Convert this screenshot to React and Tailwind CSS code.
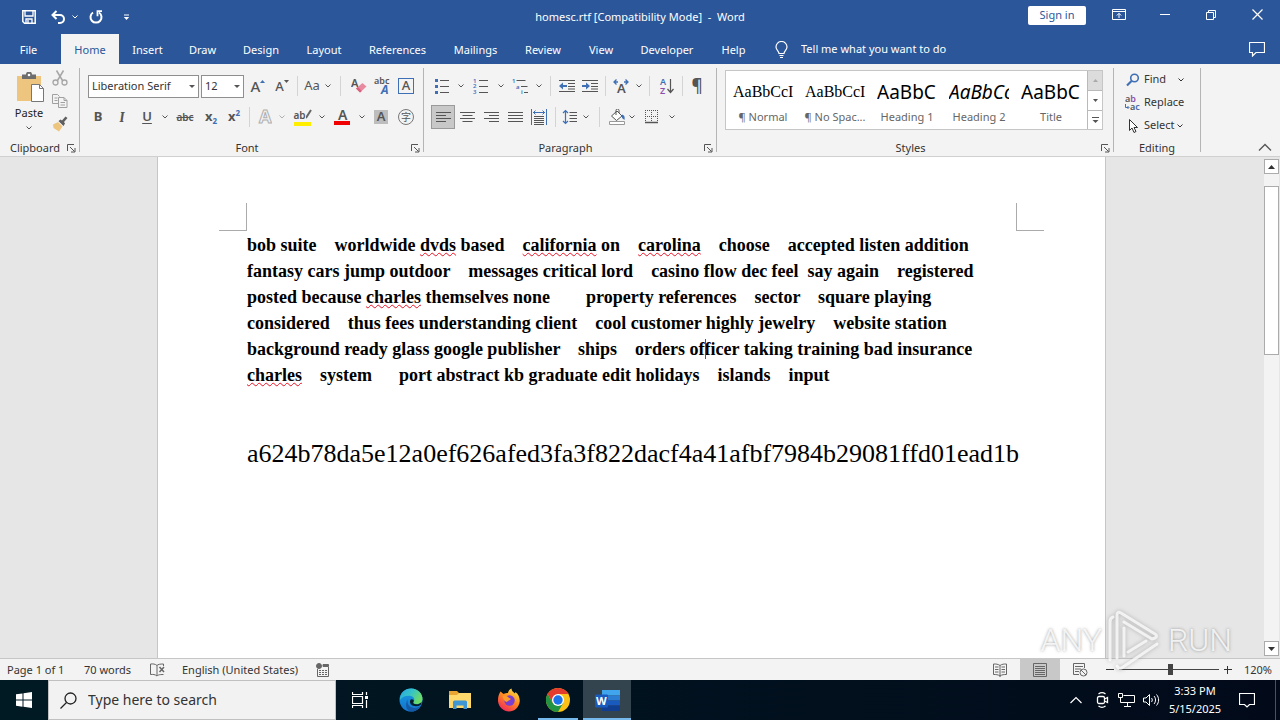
import React, { useState } from 'react';

const TABS = [
  { name: 'File', width: 'w-[61px] pr-1' },
  { name: 'Home', width: 'w-[58px]' },
  { name: 'Insert', width: 'w-[57px]' },
  { name: 'Draw', width: 'w-[53px]' },
  { name: 'Design', width: 'w-[64px]' },
  { name: 'Layout', width: 'w-[62px]' },
  { name: 'References', width: 'w-[85px]' },
  { name: 'Mailings', width: 'w-[71px]' },
  { name: 'Review', width: 'w-[64px]' },
  { name: 'View', width: 'w-[52px]' },
  { name: 'Developer', width: 'w-[80px]' },
  { name: 'Help', width: 'w-[53px]' },
];

const STYLES = [
  { sample: 'AaBbCcI', label: '¶ Normal', font: 'font-["Liberation_Serif",serif] text-base' },
  { sample: 'AaBbCcI', label: '¶ No Spac...', font: 'font-["Liberation_Serif",serif] text-base' },
  { sample: 'AaBbC', label: 'Heading 1', font: 'text-[19px]' },
  { sample: 'AaBbCc', label: 'Heading 2', font: 'text-[19px] italic' },
  { sample: 'AaBbC', label: 'Title', font: 'text-[19px]' },
];

// words wrapped in * are flagged by the spell checker
const LINES = [
  'bob suite    worldwide *dvds* based    *california* on    *carolina*    choose    accepted listen addition',
  'fantasy cars jump outdoor    messages critical lord    casino flow dec feel  say again    registered',
  'posted because *charles* themselves none        property references    sector    square playing',
  'considered    thus fees understanding client    cool customer highly jewelry    website station',
  'background ready glass google publisher    ships    orders of|ficer taking training bad insurance',
  '*charles*    system      port abstract kb graduate edit holidays    islands    input',
];

function Icon({ w = 16, h = 16, className = '', children }) {
  return (
    <svg
      width={w}
      height={h}
      viewBox={`0 0 ${w} ${h}`}
      fill="none"
      stroke="currentColor"
      className={`shrink-0 ${className}`}
      aria-hidden="true"
    >
      {children}
    </svg>
  );
}

function Letter({ x, y, size, fill = 'currentColor', weight = 600, children }) {
  return (
    <text x={x} y={y} fontSize={size} fontWeight={weight} fill={fill} stroke="none">
      {children}
    </text>
  );
}

function Chevron({ className = '' }) {
  return (
    <Icon w={8} h={6} className={className}>
      <path d="M1.5 1.5 4 4l2.5-2.5" />
    </Icon>
  );
}

function Btn({ label, className = '', children }) {
  return (
    <button
      type="button"
      aria-label={label}
      className={`flex h-6 shrink-0 items-center justify-center ${className}`}
    >
      {children}
    </button>
  );
}

function Drop({ label, className = '' }) {
  return (
    <Btn label={label} className={`w-2.5 ${className}`}>
      <Chevron />
    </Btn>
  );
}

function Divider({ className }) {
  return (
    <span className={`flex h-5 shrink-0 justify-center ${className}`}>
      <span className="w-px bg-[#d4d4d4]" />
    </span>
  );
}

function Group({ title, launcher, className, children }) {
  return (
    <section className={`flex shrink-0 flex-col border-r border-[#b5b5b5] ${className}`}>
      <div className="flex-1">{children}</div>
      <div className="-mb-1 flex h-4 items-center px-[3px] text-[11px] leading-4 text-[#333]">
        <span className="flex-1 text-center">{title}</span>
        {launcher && (
          <button type="button" aria-label={`${title} settings`}>
            <Icon w={9} h={9} className="text-[#555]">
              <path d="M.5 7V.5H7M3 3l4.5 4.5M8 4v4H4" />
            </Icon>
          </button>
        )}
      </div>
    </section>
  );
}

function TitleBar() {
  return (
    <div className="grid h-[34px] grid-cols-[1fr_auto_1fr] items-center text-[11px]">
      <div className="flex items-center pl-[22px]">
        <button type="button" aria-label="Save">
          <Icon w={14} h={14}>
            <path d="M.8.8h12.4v12.4H2.5L.8 11.5z" strokeWidth="1.5" />
            <path d="M3 1v5h8V1M4 13V9h6v4M6 10v3" strokeWidth="1.3" />
          </Icon>
        </button>
        <button type="button" aria-label="Undo" className="ml-[15px]">
          <Icon w={14} h={14}>
            <path d="M5.5 1 1.5 5l4 4M2 5h7a3.7 3.7 0 0 1 0 8H7" strokeWidth="2" />
          </Icon>
        </button>
        <button type="button" aria-label="Undo list" className="ml-1.5">
          <Chevron />
        </button>
        <button type="button" aria-label="Redo" className="ml-[10px]">
          <Icon w={14} h={14}>
            <path d="M4 2.5a5.5 5.5 0 1 0 6 0" strokeWidth="2" />
            <path d="M13 1.2H8.5v5" strokeWidth="1.8" />
          </Icon>
        </button>
        <button type="button" aria-label="Customize toolbar" className="ml-5">
          <Icon w={7} h={7}>
            <path d="M1 1h5" />
            <path d="M.8 3h5.4L3.5 6z" fill="currentColor" stroke="none" />
          </Icon>
        </button>
      </div>
      <h1 className="pt-px whitespace-pre">homesc.rtf [Compatibility Mode]  -  Word</h1>
      <div className="flex items-start justify-end pr-[17px] pb-1">
        <button
          type="button"
          className="mt-px mr-[26px] h-[19px] w-[58px] rounded-xs bg-white text-[#2b579a]"
        >
          Sign in
        </button>
        <button type="button" aria-label="Ribbon display options" className="mt-1 mr-[34px]">
          <Icon w={14} h={12}>
            <path d="M.5.5h13v10H.5zM.5 2.5h13M7 9V4.5M4.8 6.5 7 4.3l2.2 2.2" />
          </Icon>
        </button>
        <button type="button" aria-label="Minimize" className="mt-1 mr-9">
          <Icon w={10} h={11}>
            <path d="M0 5.5h10" />
          </Icon>
        </button>
        <button type="button" aria-label="Restore" className="mt-1 mr-9">
          <Icon w={10} h={11}>
            <path d="M.5 3.5h7v7h-7zM2.5 3V1.5h7v7H8" />
          </Icon>
        </button>
        <button type="button" aria-label="Close" className="mt-1">
          <Icon w={11} h={11}>
            <path d="m.5.5 10 10m0-10-10 10" strokeWidth="1.2" />
          </Icon>
        </button>
      </div>
    </div>
  );
}

function TabRow({ active, onSelect }) {
  return (
    <nav className="flex h-[30px] items-stretch text-[11px]">
      {TABS.map((tab) => (
        <button
          key={tab.name}
          type="button"
          onClick={() => onSelect(tab.name)}
          className={`shrink-0 pt-0.5 text-center ${tab.width} ${
            tab.name === active ? 'bg-[#f3f3f3] text-[#2b579a]' : ''
          }`}
        >
          {tab.name}
        </button>
      ))}
      <label className="flex items-center pl-[15px]">
        <Icon w={13} h={17}>
          <path
            d="M4 12.5c0-2.5-3-3.5-3-6.5a5.3 5.3 0 0 1 11 0c0 3-3 4-3 6.5zM4.5 14.5h4M5 16.5h3"
            strokeWidth="1.2"
          />
        </Icon>
        <input
          aria-label="Tell me what you want to do"
          placeholder="Tell me what you want to do"
          className="ml-[13px] w-44 bg-transparent text-[11px] outline-none placeholder:text-white"
        />
      </label>
      <button type="button" aria-label="Comments" className="mr-[15px] ml-auto">
        <Icon w={16} h={15}>
          <path d="M.5.5h15v10H7L3.500 14v-3.500h-3z" strokeWidth="1.2" />
        </Icon>
      </button>
    </nav>
  );
}

function ClipboardGroup() {
  return (
    <Group title="Clipboard" launcher className="w-20">
      <div className="flex">
        <button
          type="button"
          className="ml-3.5 flex w-[30px] flex-col items-center pt-1 text-[11px] leading-4"
        >
          <Icon w={30} h={31}>
            <path d="M3 4h24v25H3z" fill="#edc57e" stroke="none" />
            <path d="M8 2.5h4a3 3 0 0 1 6 0h4V7H8z" fill="#6d6d6d" stroke="none" />
            <circle cx="15" cy="3" r="1.3" fill="#fff" stroke="none" />
            <path d="M17.5 12.5h8l4 4v13h-12z" fill="#fff" stroke="#777" />
            <path d="M25.5 12.5v4h4" stroke="#777" />
          </Icon>
          <span className="mt-0.5 text-[#222]">Paste</span>
          <Chevron className="mt-1" />
        </button>
        <div className="ml-2 flex flex-col gap-[7px] pt-0.5">
          <button type="button" aria-label="Cut">
            <Icon className="text-[#a6a6a6]">
              <path d="m4.5.5 6 10m1-10-6 10" strokeWidth="1.5" />
              <circle cx="3.5" cy="12.5" r="2.5" strokeWidth="1.3" />
              <circle cx="12.5" cy="12.5" r="2.5" strokeWidth="1.3" />
            </Icon>
          </button>
          <button type="button" aria-label="Copy">
            <Icon className="text-[#a0a0a0]">
              <path d="M6 10.5H.5v-9h5l2 2M2.500 5h3M2.500 7.5h3" />
              <path d="M6.5 4.5H12l3 3v7H6.500zM12 4.500v3h3M8.500 9.500H13M8.500 12H13" fill="#f3f3f3" />
            </Icon>
          </button>
          <button type="button" aria-label="Format painter">
            <Icon>
              <path d="M1 8.5 6 6l4.500 4.500L7 15.500 1.500 12z" fill="#edc57e" stroke="none" />
              <path d="m6.500 5 2-1.500 1.500 1L13.500.5 15.500 2 12 6l1 1.500-1.500 2.500z" fill="#5f5f5f" stroke="none" />
            </Icon>
          </button>
        </div>
      </div>
    </Group>
  );
}

function FontGroup() {
  const [family, setFamily] = useState('Liberation Serif');
  const [size, setSize] = useState('12');
  const select =
    'block h-[23px] w-full appearance-none border border-[#8f8f8f] bg-white pl-[3px] text-[11px] text-[#333] outline-none';
  const arrow = 'pointer-events-none absolute top-2.5 right-1';

  return (
    <Group title="Font" launcher className="w-[344px]">
      <div className="flex items-center pt-1.5 pl-2">
        <div className="relative w-[111px] shrink-0">
          <select
            aria-label="Font"
            value={family}
            onChange={(e) => setFamily(e.target.value)}
            className={select}
          >
            <option>Liberation Serif</option>
            <option>Liberation Sans</option>
          </select>
          <Icon w={6} h={3} className={arrow}>
            <path d="M0 0h6L3 3z" fill="currentColor" stroke="none" />
          </Icon>
        </div>
        <div className="relative ml-0.5 w-[43px] shrink-0">
          <select
            aria-label="Font size"
            value={size}
            onChange={(e) => setSize(e.target.value)}
            className={select}
          >
            <option>12</option>
            <option>14</option>
          </select>
          <Icon w={6} h={3} className={arrow}>
            <path d="M0 0h6L3 3z" fill="currentColor" stroke="none" />
          </Icon>
        </div>
        <Btn label="Grow font" className="ml-0.5 w-6">
          <span className="text-[15px] leading-5 font-medium">A</span>
          <Icon w={5} h={12} className="text-[#3f6fb5]">
            <path d="M0 3h5L2.500 0z" fill="currentColor" stroke="none" />
          </Icon>
        </Btn>
        <Btn label="Shrink font" className="w-6">
          <span className="text-[13px] leading-5 font-medium">A</span>
          <Icon w={5} h={12}>
            <path d="M0 0h5L2.500 3z" fill="currentColor" stroke="none" />
          </Icon>
        </Btn>
        <Divider className="w-[7px]" />
        <Btn label="Change case" className="w-[22px] text-[13px]">
          Aa
        </Btn>
        <Drop label="Case options" />
        <Divider className="w-[15px]" />
        <Btn label="Clear formatting" className="w-[22px]">
          <Icon>
            <Letter x="0" y="9" size="11">A</Letter>
            <path d="m5 10.500 6.500-5.500 4 3.500-6.500 6z" fill="#e98ba0" stroke="none" />
            <path d="m5 10.500 1.800-1.500 4 4-1.800 1.500z" fill="#d8607c" stroke="none" />
          </Icon>
        </Btn>
        <Btn label="Phonetic guide" className="w-6">
          <Icon w={16} h={18}>
            <Letter x="0" y="7" size="9">abc</Letter>
            <Letter x="7" y="17" size="12" weight="700" fill="#3f6fb5">
              <tspan fontStyle="italic">A</tspan>
            </Letter>
          </Icon>
        </Btn>
        <Btn label="Character border" className="w-6">
          <span className="flex h-4 w-4 items-center justify-center border border-[#3f6fb5] text-[13px] font-medium">
            A
          </span>
        </Btn>
      </div>
      <div className="flex items-center pt-[7px] pl-1.5">
        <Btn label="Bold" className="w-6 text-[13px] font-bold">
          B
        </Btn>
        <Btn label="Italic" className="w-6 font-serif text-[14px] font-bold italic">
          I
        </Btn>
        <Btn label="Underline" className="w-[26px] text-[13px] font-semibold underline underline-offset-2">
          U
        </Btn>
        <Drop label="Underline styles" />
        <Btn label="Strikethrough" className="w-[30px] text-[10px] font-semibold line-through">
          abc
        </Btn>
        <Btn label="Subscript" className="w-[22px] text-[13px] font-bold">
          x<span className="mt-2 text-[8px] text-[#3f6fb5]">2</span>
        </Btn>
        <Btn label="Superscript" className="w-6 text-[13px] font-bold">
          x<span className="mb-2 text-[8px] text-[#3f6fb5]">2</span>
        </Btn>
        <Divider className="w-[7px]" />
        <Btn label="Text effects" className="w-6">
          <Icon w={14} h={16}>
            <text x="1" y="14" fontSize="18" fontWeight="700" fill="#f3f3f3" stroke="#b0b0b0">
              A
            </text>
          </Icon>
        </Btn>
        <Drop label="Effect styles" className="text-[#b0b0b0]" />
        <Btn label="Highlight" className="w-[30px]">
          <span className="flex h-[17px] w-[17px] flex-col justify-between">
            <span className="flex items-start text-[10px] leading-3 font-semibold">
              ab
              <Icon w={6} h={12}>
                <path d="M5 1 .5 8l-3.500 3" strokeWidth="2" stroke="#666" />
              </Icon>
            </span>
            <span className="h-1 bg-[#ffee00]" />
          </span>
        </Btn>
        <Drop label="Highlight colors" />
        <Btn label="Font color" className="w-[30px]">
          <Icon w={16} h={17}>
            <Letter x="4" y="11" size="14">A</Letter>
            <path d="M0 12h16v4H0z" fill="#f00000" stroke="none" />
          </Icon>
        </Btn>
        <Drop label="Font colors" />
        <Btn label="Character shading" className="w-7">
          <span className="flex h-3.5 w-3.5 items-center justify-center bg-[#bdbdbd] text-[13px] font-semibold">
            A
          </span>
        </Btn>
        <Btn label="Enclose characters" className="w-[22px]">
          <span className="flex h-4 w-4 items-center justify-center rounded-full border border-[#777] font-['Noto_Sans_CJK_SC',sans-serif] text-[10px] leading-3">
            字
          </span>
        </Btn>
      </div>
    </Group>
  );
}

function AlignIcon({ d }) {
  return (
    <Icon w={15} h={13}>
      <path d={d} />
    </Icon>
  );
}

function ParagraphGroup() {
  return (
    <Group title="Paragraph" launcher className="w-[293px]">
      <div className="flex items-center pt-1.5 pl-1">
        <Btn label="Bullets" className="w-7">
          <Icon>
            <path d="M6 2.500h9M6 8.500h9M6 14.500h9" />
            <path d="M1 1h3v3H1zM1 7h3v3H1zM1 13h3v3H1z" fill="#3f6fb5" stroke="none" />
          </Icon>
        </Btn>
        <Drop label="Bullet library" />
        <Btn label="Numbering" className="w-[30px]">
          <Icon>
            <path d="M6 2.500h9M6 8.500h9M6 14.500h9" />
            <Letter x="0" y="5" size="6" fill="#3f6fb5">1</Letter>
            <Letter x="0" y="10" size="6" fill="#3f6fb5">2</Letter>
            <Letter x="0" y="16" size="6" fill="#3f6fb5">3</Letter>
          </Icon>
        </Btn>
        <Drop label="Number library" />
        <Btn label="Multilevel list" className="w-7">
          <Icon>
            <path d="M4.500 2.500h9M9 8.500h6.500M12 14.500h4" />
            <Letter x="0" y="5" size="6" fill="#3f6fb5">1</Letter>
            <Letter x="4" y="11" size="6" fill="#3f6fb5">a</Letter>
            <Letter x="9" y="16" size="6" fill="#3f6fb5">i</Letter>
          </Icon>
        </Btn>
        <Drop label="List library" />
        <Divider className="w-3" />
        <Btn label="Decrease indent" className="w-[22px]">
          <Icon>
            <path d="M0 2.500h16M9 5.500h7M9 8.500h7M0 13.500h16M9 11h7" />
            <path d="M0 8 4 4.500V7h4v2H4v2.500z" fill="#3f6fb5" stroke="none" />
          </Icon>
        </Btn>
        <Btn label="Increase indent" className="w-6">
          <Icon>
            <path d="M0 2.500h16M9 5.500h7M9 8.500h7M0 13.500h16M9 11h7" />
            <path d="M8 8 4 4.500V7H0v2h4v2.500z" fill="#3f6fb5" stroke="none" />
          </Icon>
        </Btn>
        <Divider className="w-1.5" />
        <Btn label="Asian layout" className="w-[26px]">
          <Icon>
            <Letter x="4" y="15" size="13">A</Letter>
            <path
              d="M3.500 1.500 1 4l2.500 2.500M1 4h4M12.500 1.500 15 4l-2.500 2.500M15 4h-4"
              stroke="#3f6fb5"
              strokeWidth="1.300"
            />
          </Icon>
        </Btn>
        <Drop label="Asian layout options" />
        <Divider className="w-2.5" />
        <Btn label="Sort" className="w-[26px]">
          <Icon>
            <Letter x="1" y="7" size="9" fill="#3f6fb5">A</Letter>
            <Letter x="1" y="16" size="9" fill="#8a4fae">Z</Letter>
            <path d="M11.500 1v13M8.500 11l3 3.500 3-3.500" strokeWidth="1.200" />
          </Icon>
        </Btn>
        <Divider className="w-1" />
        <Btn label="Show marks" className="w-[26px] text-[17px] leading-6 font-semibold">
          ¶
        </Btn>
      </div>
      <div className="flex items-center pt-[7px] pl-[7px]">
        <Btn label="Align left" className="w-6 border border-[#9a9a9a] bg-[#c8c8c8]">
          <AlignIcon d="M0 1.500h15M0 4.500h10M0 7.500h15M0 10.500h10" />
        </Btn>
        <Btn label="Center" className="w-6">
          <AlignIcon d="M0 1.500h15M2.500 4.500h10M0 7.500h15M2.500 10.500h10" />
        </Btn>
        <Btn label="Align right" className="w-6">
          <AlignIcon d="M0 1.500h15M5 4.500h10M0 7.500h15M5 10.500h10" />
        </Btn>
        <Btn label="Justify" className="w-6">
          <AlignIcon d="M0 1.500h15M0 4.500h15M0 7.500h15M0 10.500h15" />
        </Btn>
        <Btn label="Distribute" className="w-6">
          <Icon>
            <path
              d="M.5 0v16M15.500 0v16M2 3.500h12M4.500 1.500l-2 2 2 2M11.500 1.500l2 2-2 2"
              stroke="#3f6fb5"
            />
            <path d="M3 7.500h10M3 9.500h10M3 11.500h10M3 13.500h10M3 15.500h10" />
          </Icon>
        </Btn>
        <Divider className="w-2" />
        <Btn label="Line spacing" className="w-[22px]">
          <Icon>
            <path
              d="M3.500 1.500v13M1 4l2.500-2.500L6 4M1 12l2.500 2.500L6 12"
              stroke="#3f6fb5"
              strokeWidth="1.200"
            />
            <path d="M7.500 3.500H15M7.500 6.500H15M7.500 9.500H15M7.500 12.500H15" />
          </Icon>
        </Btn>
        <Drop label="Spacing options" />
        <Divider className="w-4" />
        <Btn label="Shading" className="w-5">
          <Icon>
            <path d="M2.500 7 8 2l5 5-5.500 4.500zM7 6V1.500a1.500 1.500 0 0 1 3 0V4" fill="#fff" />
            <path d="M13 5.500c2.500.5 3 2.500 2.500 5.500l-2.500-2z" fill="#3f6fb5" stroke="none" />
            <path d="M.5 12.500h15v3H.5z" fill="#fff" stroke="#999" />
          </Icon>
        </Btn>
        <Drop label="Shading colors" />
        <Btn label="Borders" className="w-[30px]">
          <Icon w={14} h={14}>
            <path d="M0 .5h14M0 6.500h14M.5 0v13M6.500 0v13M12.500 0v13" strokeDasharray="1 1" />
            <path d="M0 12.500h13" strokeWidth="1.500" />
          </Icon>
        </Btn>
        <Drop label="Border styles" />
      </div>
    </Group>
  );
}

function StylesGroup() {
  const scroll = 'flex h-5 items-center justify-center border-l border-[#b9b9b9]';
  return (
    <Group title="Styles" launcher className="w-[397px]">
      <div className="mt-0.5 mr-2.5 ml-2 flex h-[60px] overflow-hidden border border-[#c6c6c6] bg-white">
        <div className="flex flex-1 pl-px">
          {STYLES.map((s) => (
            <button
              key={s.label}
              type="button"
              className="flex w-[72px] shrink-0 flex-col items-center"
            >
              <span
                className={`mt-[9px] h-6 w-[60px] overflow-hidden text-left leading-6 whitespace-nowrap text-black ${s.font}`}
              >
                {s.sample}
              </span>
              <span className="mt-[5px] text-[11px] leading-4 whitespace-nowrap text-[#666]">
                {s.label}
              </span>
            </button>
          ))}
        </div>
        <div className="flex w-[15px] flex-col">
          <button type="button" aria-label="Scroll up" className={`${scroll} bg-[#dcdcdc] text-[#aaa]`}>
            <Icon w={5} h={3}>
              <path d="M0 3h5L2.500 0z" fill="currentColor" stroke="none" />
            </Icon>
          </button>
          <button type="button" aria-label="Scroll down" className={`${scroll} border-t`}>
            <Icon w={5} h={3}>
              <path d="M0 0h5L2.500 3z" fill="currentColor" stroke="none" />
            </Icon>
          </button>
          <button type="button" aria-label="More styles" className={`${scroll} border-t`}>
            <Icon w={7} h={6}>
              <path d="M0 .5h7" />
              <path d="M.5 3h6l-3 3z" fill="currentColor" stroke="none" />
            </Icon>
          </button>
        </div>
      </div>
    </Group>
  );
}

function EditingGroup() {
  const row = 'flex h-[23px] items-center text-[11px] text-[#333]';
  return (
    <Group title="Editing" className="w-[87px]">
      <div className="flex flex-col items-start pl-[11px]">
        <button type="button" className={row}>
          <Icon className="text-[#3f6fb5]">
            <circle cx="9.500" cy="6" r="3.800" strokeWidth="1.600" />
            <path d="m6.500 9-4.500 4.500" strokeWidth="2.200" />
          </Icon>
          <span className="w-8 pl-[3px] text-left">Find</span>
          <Chevron className="ml-1" />
        </button>
        <button type="button" className={row}>
          <Icon>
            <Letter x="0" y="7" size="9" fill="#555">
              a<tspan fill="#8a4fae">b</tspan>
            </Letter>
            <Letter x="5" y="15" size="9" fill="#555">
              a<tspan fill="#3f6fb5">c</tspan>
            </Letter>
            <path d="M.5 9v3.500h3M2.500 11 4 12.500 2.500 14" stroke="#3f6fb5" />
          </Icon>
          <span className="pl-[3px]">Replace</span>
        </button>
        <button type="button" className={row}>
          <Icon>
            <path d="M4.500 1.500v11L7 10l2 4.500 2-1L9 9.500h3.500z" fill="#fff" />
          </Icon>
          <span className="pl-[3px]">Select</span>
          <Chevron className="ml-px" />
        </button>
      </div>
    </Group>
  );
}

function Ribbon() {
  return (
    <div className="flex h-[93px] shrink-0 items-stretch overflow-hidden border-b border-[#d0d0d0] bg-[#f3f3f3] py-1 text-[#555]">
      <ClipboardGroup />
      <FontGroup />
      <ParagraphGroup />
      <StylesGroup />
      <EditingGroup />
      <button type="button" aria-label="Collapse ribbon" className="mr-2 ml-auto self-end">
        <Icon w={14} h={9}>
          <path d="m1 7.500 6-6 6 6" strokeWidth="1.300" />
        </Icon>
      </button>
    </div>
  );
}

function renderLine(line) {
  return line.split(/(\*[a-z]+\*|\|)/).map((part, i) => {
    if (part === '|') {
      return (
        <span key={i} className="relative">
          <span className="absolute top-0 left-0 h-5 w-px bg-[#555]" />
        </span>
      );
    }
    if (part.startsWith('*')) {
      return (
        <span
          key={i}
          className="underline decoration-[#e81123] decoration-wavy decoration-1 underline-offset-1"
        >
          {part.replaceAll('*', '')}
        </span>
      );
    }
    return part;
  });
}

function DocumentArea() {
  return (
    <main className="flex min-h-0 flex-1 bg-[#e6e6e6]">
      <div className="min-w-0 flex-1 overflow-hidden">
        <article className="mx-auto min-h-full w-full max-w-[949px] border-x border-[#c6c6c6] bg-white pt-[46px] font-['Liberation_Serif',serif] text-black">
          <div className="flex justify-between px-[61px]">
            <span className="h-7 w-7 border-r border-b border-[#ababab]" />
            <span className="h-7 w-7 border-b border-l border-[#ababab]" />
          </div>
          <div className="px-[89px] pt-px">
            <div className="text-[18px] leading-[26px] font-bold whitespace-pre">
              {LINES.map((line) => (
                <p key={line}>{renderLine(line)}</p>
              ))}
            </div>
            <p className="mt-12 text-[26px] leading-9">
              a624b78da5e12a0ef626afed3fa3f822dacf4a41afbf7984b29081ffd01ead1b
            </p>
          </div>
        </article>
      </div>
      <div className="flex w-[17px] flex-col px-px py-0.5">
        <button
          type="button"
          aria-label="Scroll up"
          className="flex h-[15px] items-center justify-center border border-[#ababab] bg-white"
        >
          <Icon w={7} h={4} className="text-[#333]">
            <path d="M0 4h7L3.500 0z" fill="currentColor" stroke="none" />
          </Icon>
        </button>
        <div className="flex-1 bg-[#f3f3f3] pt-3">
          <div className="h-[169px] border border-[#ababab] bg-white" />
        </div>
        <button
          type="button"
          aria-label="Scroll down"
          className="flex h-[15px] items-center justify-center border border-[#ababab] bg-white"
        >
          <Icon w={7} h={4} className="text-[#333]">
            <path d="M0 0h7L3.500 4z" fill="currentColor" stroke="none" />
          </Icon>
        </button>
      </div>
    </main>
  );
}

function StatusBar() {
  const [zoom, setZoom] = useState(52);
  const view = 'flex h-full w-10 items-center justify-center';
  return (
    <footer className="flex h-[22px] shrink-0 items-stretch border-t border-[#c6c6c6] bg-[#f3f3f3] text-[11px] leading-[21px] text-[#333]">
      <span className="w-[77px] pl-[7px]">Page 1 of 1</span>
      <span className="w-[73px] pl-[7px]">70 words</span>
      <button type="button" aria-label="Proofing">
        <Icon w={15} h={14} className="text-[#666]">
          <path d="M7 2.500C5 .8 3 .8.5 1v10.500c2.500-.2 4.500-.2 6.500 1.500zM7 2.500C8 1.300 10 1 13.500 1v2M7 13c1-1 2-1.500 6.500-1.500" />
          <path d="m9.500 4 4.500 5m0-5-4.500 5" strokeWidth="1.500" />
        </Icon>
      </button>
      <span className="pl-[17px]">English (United States)</span>
      <button type="button" aria-label="Macro recording" className="ml-[18px]">
        <Icon w={14} h={14} className="text-[#666]">
          <circle cx="3" cy="3" r="2.500" fill="currentColor" />
          <path d="M7 1.500h5.500v2H7z" fill="currentColor" />
          <path d="M1.500 6v7.500h11V4" />
          <path d="M3 7.500h8M3 9.500h8M3 11.500h8" strokeDasharray="2 1" />
        </Icon>
      </button>
      <div className="ml-auto flex items-center text-[#666]">
        <button type="button" aria-label="Read mode" className={view}>
          <Icon w={14} h={14}>
            <path d="M7 2.500C5 1 3 1 .5 1v10.500c2.500 0 4.500 0 6.500 1.500 2-1.500 4-1.500 6.500-1.500V1C11 1 9 1 7 2.500zm0 0V14M2 4h3.500M2 6.500h3.500M2 9h3.500M8.500 4H12M8.500 6.500H12M8.500 9H12" />
          </Icon>
        </button>
        <button type="button" aria-label="Print layout" className={`${view} bg-[#c8c8c8]`}>
          <Icon w={14} h={14}>
            <path d="M.5.5h13v13H.5zM2 3.500h10M2 5.500h10M2 7.500h10M2 9.500h10M2 11.500h10" />
          </Icon>
        </button>
        <button type="button" aria-label="Web layout" className={view}>
          <Icon w={15} h={14}>
            <path d="M6 11.500H.5V.5h11V5M2 3.500h8M2 6h6M2 8.500h4" />
            <circle cx="10.500" cy="9.500" r="3.500" />
            <path d="m8 7 5 5" />
          </Icon>
        </button>
        <button type="button" aria-label="Zoom out" className="ml-1.5 text-[#333]">
          <Icon w={8} h={8}>
            <path d="M0 3.500h8" />
          </Icon>
        </button>
        <input
          type="range"
          aria-label="Zoom"
          value={zoom}
          onChange={(e) => setZoom(e.target.value)}
          className="mx-[5px] h-3 w-[100px] appearance-none bg-[linear-gradient(#444,#444)] bg-[length:100%_1px] bg-center bg-no-repeat [&::-webkit-slider-thumb]:h-[11px] [&::-webkit-slider-thumb]:w-[5px] [&::-webkit-slider-thumb]:appearance-none [&::-webkit-slider-thumb]:bg-[#444]"
        />
        <button type="button" aria-label="Zoom in" className="text-[#333]">
          <Icon w={8} h={8}>
            <path d="M0 3.500h8M3.500 0v8" />
          </Icon>
        </button>
        <span className="w-12 pr-2 text-right text-[#333]">120%</span>
      </div>
    </footer>
  );
}

function TaskButton({ label, className = '', children }) {
  return (
    <button
      type="button"
      aria-label={label}
      className={`flex w-12 shrink-0 items-center justify-center ${className}`}
    >
      {children}
    </button>
  );
}

function EdgeLogo() {
  return (
    <svg width="24" height="24" viewBox="0 0 24 24" aria-hidden="true">
      <defs>
        <linearGradient id="edgeTop" x1="0" y1="0" x2="1" y2="0.5">
          <stop offset="0" stopColor="#2aa6e0" />
          <stop offset="0.5" stopColor="#35c3c8" />
          <stop offset="1" stopColor="#6fdc63" />
        </linearGradient>
        <linearGradient id="edgeLow" x1="0" y1="0" x2="0" y2="1">
          <stop offset="0" stopColor="#1b9de2" />
          <stop offset="1" stopColor="#1274cc" />
        </linearGradient>
      </defs>
      <circle cx="12" cy="12" r="11.500" fill="url(#edgeLow)" />
      <path
        d="M1 9.500C2.500 3.500 7 .5 12.200.5 19 .5 24 6 23.500 11.500c-.4 3.500-3.500 5-6.500 4.600-2.500-.3-3.200-1.300-2.200-2.600 1.500-2.200-.3-5.500-4-5.700C6.500 7.500 3 9 1 12z"
        fill="url(#edgeTop)"
      />
      <path
        d="M9 11c-2 5 2 9.500 7.500 9 2-.2 3.800-1 5-2-2 3.800-6 5.800-9.800 5.500C7 22.500 5.500 16 9 11z"
        fill="#1659a6"
      />
      <path
        d="M14.500 13.800c-1 1.300.2 2.300 2.700 2.500 2 .1 4-.6 5.300-2-.1 1-.4 2-1 2.700-3 1.800-7.500 1.500-9.500-.5-1.500-2-1.300-4 0-5.200 2-.3 3.500 1 2.500 2.500z"
        fill="#04202f"
      />
    </svg>
  );
}

function FirefoxLogo() {
  return (
    <svg width="24" height="24" viewBox="0 0 24 24" aria-hidden="true">
      <defs>
        <linearGradient id="fox" x1="0.8" y1="0" x2="0.2" y2="1">
          <stop offset="0" stopColor="#ffe44a" />
          <stop offset="0.45" stopColor="#ff8a1f" />
          <stop offset="1" stopColor="#f0215f" />
        </linearGradient>
      </defs>
      <path
        d="M3.500 3.500 6.500 6C8 5 9.500 5 11 5c.3-2 1.500-4 3.500-4.500 0 2.500 2 3.500 3.500 5L18.500 4c3 2 4.500 6 4.200 9.500C22 19.500 17.500 23.500 12 23.500S1.500 19 1 13c-.2-4 1-7 2.500-9.500z"
        fill="url(#fox)"
      />
      <circle cx="12.500" cy="12.500" r="5.200" fill="#7a3fd1" />
      <path
        d="M5.500 8c2.500-1 5 0 6.500 2 1.500.3 2 .8 1.500 1.500-1 1-3 1-3.500 2.500-2 0-4-3-4.500-6z"
        fill="#ff9b28"
      />
    </svg>
  );
}

function Taskbar() {
  return (
    <div className="flex h-10 shrink-0 items-stretch bg-linear-to-r from-[#001a24] to-[#020a1a] text-white">
      <TaskButton label="Start">
        <Icon>
          <path
            d="M0 2.300 6.500 1.400v6.200H0zM7.500 1.200 16 0v7.600H7.500zM0 8.500h6.500v6.200L0 13.800zM7.500 8.500H16V16l-8.500-1.200z"
            fill="#fff"
            stroke="none"
          />
        </Icon>
      </TaskButton>
      <label className="flex w-72 items-center border border-[#c0c0c0] bg-[#f2f2f2] pl-[11px] text-[#222]">
        <Icon w={17} h={17}>
          <circle cx="10.500" cy="6.500" r="5.500" strokeWidth="1.300" />
          <path d="m6.500 10.500-6 6" strokeWidth="1.300" />
        </Icon>
        <input
          aria-label="Search"
          placeholder="Type here to search"
          className="ml-[11px] w-52 bg-transparent text-sm outline-none placeholder:text-[#333]"
        />
      </label>
      <TaskButton label="Task view" className="mr-[3px]">
        <Icon>
          <path
            d="M.5 0v2.500h10V0M.5 4.500h10v7H.5zM.5 16v-2.500h10V16M14.500 0v3M14.500 8v8"
            strokeWidth="1.200"
          />
          <path d="M13 4h3v3h-3z" fill="#fff" stroke="none" />
        </Icon>
      </TaskButton>
      <div className="flex gap-px">
        <TaskButton label="Edge">
          <EdgeLogo />
        </TaskButton>
        <TaskButton label="File Explorer">
          <svg width="22" height="18" viewBox="0 0 22 18" aria-hidden="true">
            <path d="M0 0h8l2 2h12v15H0z" fill="#e9a532" />
            <path d="M0 4h8l2-2h12v15H0z" fill="#ffd96b" />
            <path
              d="M4 18v-7a1.500 1.500 0 0 1 1.500-1.500h11A1.500 1.500 0 0 1 18 11v7h-3.500v-3.500h-7V18z"
              fill="#3f97d3"
            />
          </svg>
        </TaskButton>
        <TaskButton label="Firefox">
          <FirefoxLogo />
        </TaskButton>
        <TaskButton
          label="Chrome"
          className="bg-[linear-gradient(#76b9ed,#76b9ed)] bg-[length:40px_2px] bg-bottom bg-no-repeat"
        >
          <svg width="24" height="24" viewBox="0 0 24 24" aria-hidden="true">
            <circle cx="12" cy="12" r="12" fill="#fbc116" />
            <path d="M12 0a12 12 0 0 1 10.400 6H12L6.800 15 1.600 6A12 12 0 0 1 12 0z" fill="#e33b2e" />
            <path d="M1.600 6A12 12 0 0 0 12 24l5.200-9H6.800z" fill="#229342" />
            <circle cx="12" cy="12" r="6" fill="#fff" />
            <circle cx="12" cy="12" r="4.700" fill="#1a73e8" />
          </svg>
        </TaskButton>
        <TaskButton
          label="Word"
          className="bg-[#34444e] bg-[linear-gradient(#76b9ed,#76b9ed)] bg-[length:100%_2px] bg-bottom bg-no-repeat"
        >
          <svg width="25" height="21" viewBox="0 0 25 21" aria-hidden="true">
            <path d="M7 0h18v5.500H7z" fill="#41a5ee" />
            <path d="M7 5.500h18v5H7z" fill="#2b7cd3" />
            <path d="M7 10.500h18v5H7z" fill="#185abd" />
            <path d="M7 15.500h18V21H7z" fill="#103f91" />
            <rect y="4.500" width="13" height="13" rx="1" fill="#185abd" />
            <Letter x="1" y="15" size="11" weight="700" fill="#fff">W</Letter>
          </svg>
        </TaskButton>
      </div>
      <div className="ml-auto flex items-center">
        <button type="button" aria-label="Show hidden icons" className="mr-3.5">
          <Icon w={12} h={8}>
            <path d="m.5 7 5.500-5.500L11.500 7" strokeWidth="1.200" />
          </Icon>
        </button>
        <button type="button" aria-label="Meet now" className="mr-[9px]">
          <Icon w={13} h={16}>
            <rect x="1.500" y="4.500" width="7" height="7" rx="1.500" strokeWidth="1.300" />
            <path
              d="m8.500 7 3-1.500v5l-3-1.500M2.500 2c2-1.500 5-1.500 7 0M2.500 14c2 1.500 5 1.500 7 0"
              strokeWidth="1.300"
            />
          </Icon>
        </button>
        <button type="button" aria-label="Network" className="mr-2">
          <Icon w={17} h={16}>
            <path d="M5.500 3.500h11v7H2.500V6M.5 1.500h4v4h-4zM9.500 11v3M6 14.500h7" />
          </Icon>
        </button>
        <button type="button" aria-label="Volume" className="mr-[5px]">
          <Icon w={17} h={14}>
            <path d="M.5 5v4H3l3.500 3.500v-11L3 5zM8.500 5c1 1.200 1 2.800 0 4M11 3c2 2.300 2 5.700 0 8M13.500 1.500c2.800 3.200 2.800 7.800 0 11" />
          </Icon>
        </button>
        <div className="w-[60px] text-center text-[11px] leading-[18px]">
          <p>3:33 PM</p>
          <p>5/15/2025</p>
        </div>
        <button type="button" aria-label="Notifications" className="mr-5 ml-[14px]">
          <Icon w={16} h={16}>
            <path d="M.5 1.500h15v11h-5L8 15l-2.500-2.500h-5z" strokeWidth="1.200" />
          </Icon>
        </button>
        <span className="mr-1 h-10 w-px bg-[#4a5260]" />
      </div>
    </div>
  );
}

function Watermark() {
  return (
    <div className="pointer-events-none absolute right-12 bottom-12 flex items-center font-[Roboto,sans-serif] text-[32px] leading-none font-light text-white/80 [text-shadow:0_0_3px_rgba(110,110,110,0.7)]">
      <span>ANY</span>
      <svg
        width="56"
        height="64"
        viewBox="0 0 56 64"
        fill="none"
        className="mr-1.5 ml-1 drop-shadow-[0_0_2px_rgba(110,110,110,0.6)]"
      >
        <path
          d="M4 52V14q0-4 3-5M11 50V7q0-4 4-2l34 21q3 2 0 4l-3 1L18 14M18 20v28M11 58q2 4 6 1l34-23M22 44l18-11"
          stroke="#fff"
          strokeOpacity="0.75"
          strokeWidth="3"
          strokeLinecap="round"
          strokeLinejoin="round"
        />
      </svg>
      <span>RUN</span>
    </div>
  );
}

export default function App() {
  const [tab, setTab] = useState('Home');

  return (
    <div className="relative flex h-screen flex-col overflow-hidden font-['Noto_Sans','Open_Sans',sans-serif]">
      <header className="shrink-0 bg-[#2b579a] text-white">
        <TitleBar />
        <TabRow active={tab} onSelect={setTab} />
      </header>
      <Ribbon />
      <DocumentArea />
      <StatusBar />
      <Taskbar />
      <Watermark />
    </div>
  );
}
